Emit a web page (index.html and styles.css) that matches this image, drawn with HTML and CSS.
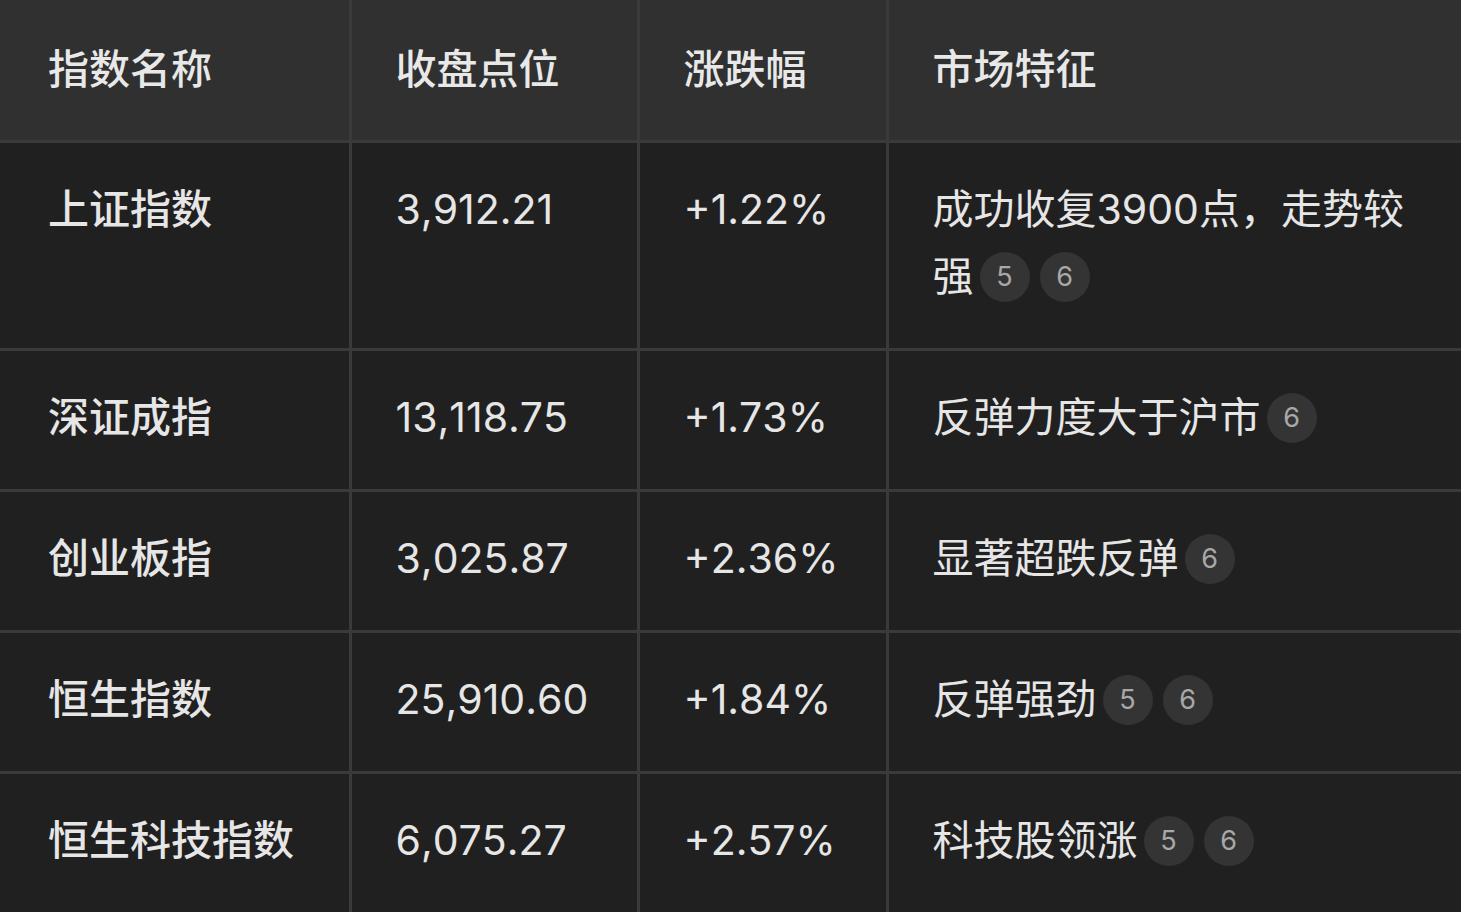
FILE: index.html
```html
<!DOCTYPE html>
<html lang="zh">
<head>
<meta charset="utf-8">
<link rel="stylesheet" href="styles.css">
</head>
<body>
<table class="tbl">
  <colgroup>
    <col class="c1"><col class="c2"><col class="c3"><col class="c4">
  </colgroup>
  <thead>
    <tr><th>指数名称</th><th>收盘点位</th><th>涨跌幅</th><th>市场特征</th></tr>
  </thead>
  <tbody>
    <tr><td class="name">上证指数</td><td>3,912.21</td><td>+1.22%</td><td>成功收复3900点，走势较强<span class="cite">5</span><span class="cite">6</span></td></tr>
    <tr><td class="name">深证成指</td><td>13,118.75</td><td>+1.73%</td><td>反弹力度大于沪市<span class="cite">6</span></td></tr>
    <tr><td class="name">创业板指</td><td>3,025.87</td><td>+2.36%</td><td>显著超跌反弹<span class="cite">6</span></td></tr>
    <tr><td class="name">恒生指数</td><td>25,910.60</td><td>+1.84%</td><td>反弹强劲<span class="cite">5</span><span class="cite">6</span></td></tr>
    <tr><td class="name">恒生科技指数</td><td>6,075.27</td><td>+2.57%</td><td>科技股领涨<span class="cite">5</span><span class="cite">6</span></td></tr>
  </tbody>
</table>
</body>
</html>
```

FILE: styles.css
```css
html, body {
  margin: 0;
  padding: 0;
  background: #202020;
}
body {
  font-family: "Inter", "Noto Sans CJK SC", sans-serif;
  color: #e6e6e6;
  overflow: hidden;
  font-kerning: none;
}
.tbl {
  width: 1461px;
  border-collapse: collapse;
  table-layout: fixed;
}
.c1 { width: 350px; }
.c2 { width: 288px; }
.c3 { width: 249px; }
.tbl th, .tbl td {
  text-align: left;
  vertical-align: top;
  padding: 33px 40px 38px 44px;
  font-size: 41px;
  line-height: 67px;
  border-right: 3px solid #3a3a3a;
  border-bottom: 3px solid #3a3a3a;
}
.tbl th:first-child, .tbl td:first-child { padding-left: 48px; }
.tbl th:last-child, .tbl td:last-child { border-right: none; }
.tbl th {
  background: #303030;
  font-weight: 500;
  color: #e8e8e8;
  padding-top: 36px;
  padding-bottom: 37px;
}
.tbl td { font-weight: 400; }
.tbl td.name { font-weight: 500; }
.cite {
  display: inline-flex;
  align-items: center;
  justify-content: center;
  width: 50px;
  height: 50px;
  border-radius: 50%;
  background: #343434;
  color: #a8a8a8;
  font-size: 27px;
  line-height: 1;
  vertical-align: middle;
  margin-left: 6px;
  position: relative;
  top: -3px;
}
.cite + .cite { margin-left: 10px; }
```
